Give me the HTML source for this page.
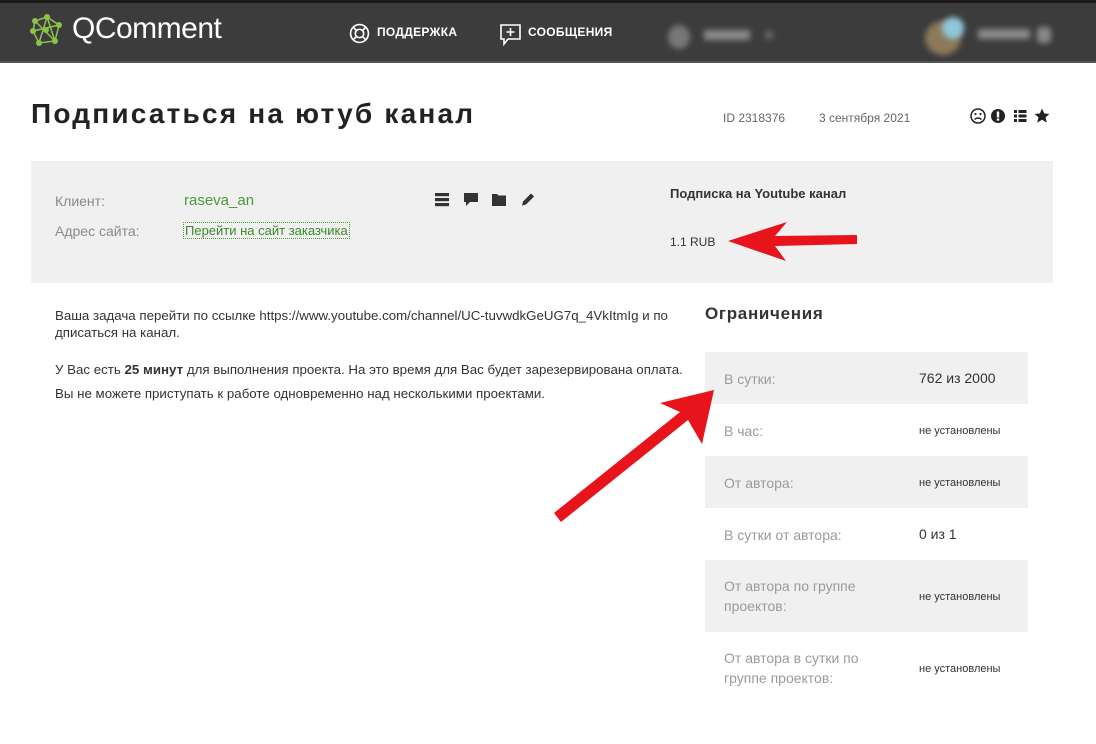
<!DOCTYPE html>
<html><head><meta charset="utf-8"><style>
*{margin:0;padding:0;box-sizing:border-box}
body{width:1096px;height:744px;background:#fff;font-family:"Liberation Sans","DejaVu Sans",sans-serif;position:relative;overflow:hidden;color:#333}
.hdr{position:absolute;left:0;top:0;width:1096px;height:63px;background:#3c3c3c;border-top:3px solid #1a1a1a;border-bottom:2px solid #555}
.abs{position:absolute}
.nav{color:#fff;font-weight:bold;font-size:12px;letter-spacing:.3px}
.blur{filter:blur(3px)}
.lbl{color:#8a8a8a;font-size:14px}
.row{position:absolute;left:705px;width:323px;font-size:14px}
.row.g{background:#f0f0f0}
.row .k{position:absolute;left:19px;color:#9a9a9a;line-height:20px}
.row .v{position:absolute;left:214px;color:#333}
.sm{font-size:11px !important}
.p{font-size:13.3px;color:#333;line-height:17px}
</style></head><body>
<div class="hdr">
 <svg class="abs" style="left:29px;top:10px" width="36" height="36" viewBox="0 0 36 36">
  <g stroke="#8bc34a" stroke-width="1.5" fill="none"><path d="M6 8L18 4L30 12L26 28L10 30L4 18Z M6 8L26 28 M18 4L10 30 M30 12L4 18 M18 4L26 28"/></g>
  <g fill="#8bc34a"><circle cx="6" cy="8" r="3"/><circle cx="18" cy="4" r="3"/><circle cx="30" cy="12" r="3"/><circle cx="26" cy="28" r="3"/><circle cx="10" cy="30" r="3"/><circle cx="4" cy="18" r="3"/><circle cx="17" cy="17" r="3"/></g>
 </svg>
 <div class="abs" style="left:72px;top:9px;color:#fff;font-size:30px;letter-spacing:-.5px">QComment</div>
 <svg class="abs" style="left:349px;top:20px" width="21" height="21" viewBox="0 0 20 20"><g stroke="#fff" stroke-width="1.6" fill="none"><circle cx="10" cy="10" r="8.5"/><circle cx="10" cy="10" r="4"/><path d="M4 4l3 3M16 4l-3 3M4 16l3-3M16 16l-3-3"/></g></svg>
 <div class="abs nav" style="left:377px;top:22px">ПОДДЕРЖКА</div>
 <svg class="abs" style="left:499px;top:19px" width="24" height="24" viewBox="0 0 24 24"><g stroke="#fff" stroke-width="1.6" fill="none"><path d="M2 3h19v14H9l-4 5v-5H2z"/><path d="M11.5 6v8M7.5 10h8"/></g></svg>
 <div class="abs nav" style="left:528px;top:22px">СООБЩЕНИЯ</div>
 <div class="abs blur" style="left:668px;top:22px;width:22px;height:24px;border-radius:50%;background:#777"></div>
 <div class="abs blur" style="left:704px;top:27px;width:46px;height:10px;background:#8a8a8a"></div>
 <div class="abs blur" style="left:765px;top:28px;width:8px;height:8px;background:#666"></div>
 <div class="abs blur" style="left:925px;top:18px;width:36px;height:34px;border-radius:50%;background:#8c7a5a"></div>
 <div class="abs blur" style="left:942px;top:14px;width:22px;height:22px;border-radius:50%;background:#8fc8d8"></div>
 <div class="abs blur" style="left:978px;top:26px;width:52px;height:10px;background:#8a8a8a"></div>
 <div class="abs blur" style="left:1037px;top:24px;width:14px;height:16px;border-radius:4px;background:#888"></div>
</div>

<div class="abs" style="left:31px;top:98px;font-size:28px;color:#222;letter-spacing:2.2px;font-weight:bold">Подписаться на ютуб канал</div>
<div class="abs" style="left:723px;top:111px;font-size:12px;color:#666">ID 2318376</div>
<div class="abs" style="left:819px;top:111px;font-size:12px;color:#666">3 сентября 2021</div>
<svg class="abs" style="left:969px;top:107px" width="82" height="18" viewBox="0 0 82 18">
 <g fill="none" stroke="#222" stroke-width="1.5"><circle cx="9" cy="9" r="7"/></g>
 <g fill="#222"><circle cx="6.5" cy="7" r="1.1"/><circle cx="11.5" cy="7" r="1.1"/></g>
 <path d="M5.5 12.5q3.5-3 7 0" stroke="#222" stroke-width="1.4" fill="none"/>
 <circle cx="29" cy="9" r="7" fill="#222"/><rect x="27.8" y="4.5" width="2.4" height="6" fill="#fff"/><rect x="27.8" y="11.5" width="2.4" height="2.2" fill="#fff"/>
 <g fill="#222"><rect x="45" y="3" width="3" height="3"/><rect x="45" y="7.5" width="3" height="3"/><rect x="45" y="12" width="3" height="3"/><rect x="49.5" y="3" width="8" height="3"/><rect x="49.5" y="7.5" width="8" height="3"/><rect x="49.5" y="12" width="8" height="3"/></g>
 <path d="M73 1.5l2.2 5 5.3.4-4 3.5 1.3 5.2L73 12.8l-4.8 2.8 1.3-5.2-4-3.5 5.3-.4z" fill="#222"/>
</svg>

<div class="abs" style="left:31px;top:161px;width:1022px;height:122px;background:#f0f0f0"></div>
<div class="abs lbl" style="left:55px;top:193px">Клиент:</div>
<div class="abs lbl" style="left:55px;top:223px">Адрес сайта:</div>
<div class="abs" style="left:184px;top:192px;font-size:15px;color:#4a9a3a">raseva_an</div>
<div class="abs" style="left:183px;top:222px;font-size:13px;color:#3a8a2a;border:1px dotted #4a9a3a;padding:0 1px">Перейти на сайт заказчика</div>
<svg class="abs" style="left:434px;top:191px" width="104" height="18" viewBox="0 0 104 18">
 <g fill="#333"><rect x="1" y="2" width="14" height="3.2"/><rect x="1" y="7" width="14" height="3.2"/><rect x="1" y="12" width="14" height="3.2"/>
 <path d="M30 2h14v9h-8l-4 4v-4h-2z"/>
 <path d="M58 3h5l1.5 1.5H72v10.5H58z"/>
 <path d="M97 2.5l3 3-8 8-4 1 1-4z"/></g>
</svg>
<div class="abs" style="left:670px;top:186px;font-size:13px;font-weight:bold;color:#333">Подписка на Youtube канал</div>
<div class="abs" style="left:670px;top:235px;font-size:12px;color:#333">1.1 RUB</div>

<div class="abs p" style="left:55px;top:307px;width:660px">Ваша задача перейти по ссылке https://www.youtube.com/channel/UC-tuvwdkGeUG7q_4VkItmIg и по<br>дписаться на канал.</div>
<div class="abs p" style="left:55px;top:361px;white-space:nowrap">У Вас есть <b>25 минут</b> для выполнения проекта. На это время для Вас будет зарезервирована оплата.</div>
<div class="abs p" style="left:55px;top:385px">Вы не можете приступать к работе одновременно над несколькими проектами.</div>

<div class="abs" style="left:705px;top:304px;font-size:17px;font-weight:bold;color:#333;letter-spacing:.7px">Ограничения</div>
<div class="row g" style="top:352px;height:52px"><span class="k" style="top:17px">В сутки:</span><span class="v" style="top:18px">762 из 2000</span></div>
<div class="row" style="top:404px;height:52px"><span class="k" style="top:17px">В час:</span><span class="v sm" style="top:21px">не установлены</span></div>
<div class="row g" style="top:456px;height:52px"><span class="k" style="top:17px">От автора:</span><span class="v sm" style="top:21px">не установлены</span></div>
<div class="row" style="top:508px;height:52px"><span class="k" style="top:17px">В сутки от автора:</span><span class="v" style="top:18px">0 из 1</span></div>
<div class="row g" style="top:560px;height:72px"><span class="k" style="top:16px">От автора по группе<br>проектов:</span><span class="v sm" style="top:31px">не установлены</span></div>
<div class="row" style="top:632px;height:72px"><span class="k" style="top:16px">От автора в сутки по<br>группе проектов:</span><span class="v sm" style="top:31px">не установлены</span></div>

<svg class="abs" style="left:0;top:0" width="1096" height="744">
 <polygon fill="#e8141c" points="728,241 787,222 775,236 857,235 857,244 775,246 786,261"/>
 <polygon fill="#e8141c" points="714,390 702,444 688,420 561,522 554,513 680,412 660,403"/>
</svg>
</body></html>
